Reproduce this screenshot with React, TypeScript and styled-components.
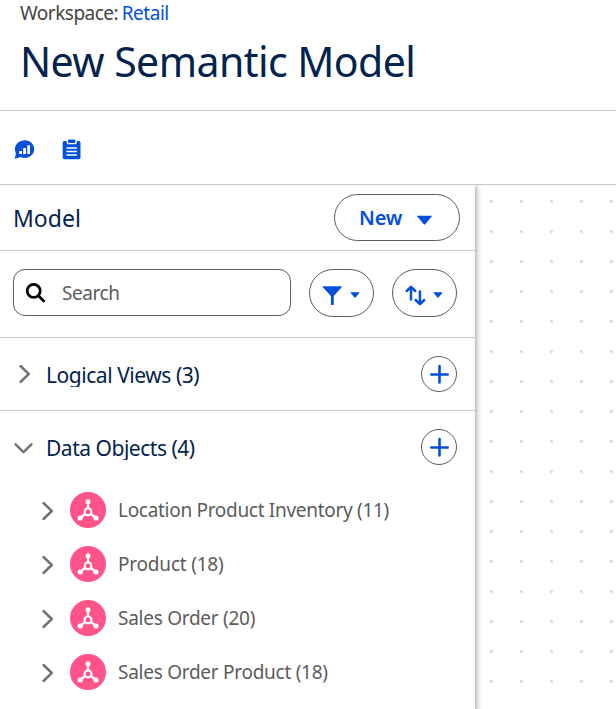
import React from "react";
import styled, { createGlobalStyle } from "styled-components";

const BLUE = "#0250d9";
const NAVY = "#03234d";
const LINE = "#c9c9c9";
const OUTLINE = "#5c5c5c";
const GREY = "#5c5c5c";

const GlobalStyle = createGlobalStyle`
  * { box-sizing: border-box; }
  body {
    margin: 0;
    background: #fff;
    font-family: "Segoe UI", "Noto Sans", "Open Sans", sans-serif;
    overflow: hidden;
  }
  svg { display: block; flex: none; }
`;

const Page = styled.div`
  width: 616px;
  height: 709px;
  display: flex;
  flex-direction: column;
  overflow: hidden;
`;

const Header = styled.header`
  height: 111px;
  flex: none;
  padding-left: 20px;
  border-bottom: 1px solid ${LINE};
`;

const Label = styled.span<{ $size: number; $track?: number; $color?: string; $weight?: number }>`
  font-size: ${(p) => p.$size}px;
  letter-spacing: ${(p) => p.$track ?? 0}px;
  color: ${(p) => p.$color ?? GREY};
  font-weight: ${(p) => p.$weight ?? 400};
  white-space: nowrap;
`;

const Crumb = styled.div`
  display: flex;
  gap: 3.5px;
  height: 26px;
  line-height: 26px;
`;

const Title = styled.h1`
  margin: 7px 0 0;
  height: 56px;
  line-height: 56px;
  font-size: 41px;
  letter-spacing: -0.55px;
  font-weight: 400;
  color: ${NAVY};
  white-space: nowrap;
`;

const Toolbar = styled.div`
  height: 74px;
  flex: none;
  display: flex;
  align-items: center;
  padding: 4px 0 0 14px;
  gap: 25.5px;
  border-bottom: 1px solid ${LINE};
`;

const Body = styled.div`
  flex: 1;
  display: flex;
  min-height: 0;
`;

const Panel = styled.aside`
  width: 475px;
  flex: none;
  background: #fff;
  box-shadow: 1px 2px 5px 1px rgba(0, 0, 0, 0.32);
  clip-path: inset(0 -10px 0 0);
`;

const Canvas = styled.main`
  flex: 1;
  background-image: radial-gradient(circle at 1.5px 1.5px, #dadada 1px, transparent 2px);
  background-size: 30px 30px;
  background-position: 15px 15px;
`;

const ModelRow = styled.div`
  height: 66px;
  display: flex;
  align-items: center;
  justify-content: space-between;
  padding: 0 15px 0 13px;
  border-bottom: 1px solid ${LINE};
`;

const NewButton = styled.button`
  width: 126px;
  height: 47px;
  padding: 0 0 0 24px;
  display: flex;
  align-items: center;
  gap: 14px;
  border: 1px solid ${OUTLINE};
  border-radius: 24px;
  background: #fff;
  font-family: inherit;
`;

const FilterRow = styled.div`
  height: 87px;
  display: flex;
  padding: 18px 0 0 13px;
  gap: 18px;
  border-bottom: 1px solid ${LINE};
`;

const SearchBox = styled.div`
  width: 278px;
  height: 47px;
  display: flex;
  align-items: center;
  padding-left: 11px;
  gap: 15px;
  border: 1px solid ${OUTLINE};
  border-radius: 12px;
`;

const PillButton = styled.button`
  width: 65px;
  height: 48px;
  padding: 0;
  border: 1px solid ${OUTLINE};
  border-radius: 24px;
  background: #fff;
`;

const SectionRow = styled.div<{ $divided?: boolean }>`
  height: ${(p) => (p.$divided ? 73 : 72)}px;
  display: flex;
  align-items: center;
  padding: 0 18px 0 13px;
  border-bottom: ${(p) => (p.$divided ? `1px solid ${LINE}` : "none")};
`;

const SectionTitle = styled.div`
  flex: 1;
  height: 25px;
  margin: 1px 0 0 11px;
  line-height: 26px;
  overflow: hidden;
`;

const AddButton = styled.button`
  width: 36px;
  height: 36px;
  padding: 0;
  display: flex;
  align-items: center;
  justify-content: center;
  border: 1px solid ${OUTLINE};
  border-radius: 50%;
  background: #fff;
`;

const ObjectRow = styled.div`
  height: 54px;
  display: flex;
  align-items: center;
  padding-left: 36px;
`;

const ObjectIcon = styled.div`
  width: 36px;
  height: 36px;
  margin: 0 12px;
  border-radius: 50%;
  background: #ff538a;
`;

const Chevron = ({ open, drop = 0 }: { open?: boolean; drop?: number }) => (
  <svg width="22" height="24" viewBox={`0 ${-drop} 22 24`} fill="none" stroke="#747474" strokeWidth="2.5" strokeLinecap="round" strokeLinejoin="round">
    <path d={open ? "M2.6 9.4 10.5 17.200 18.400 9.400" : "M7.500 4 15.800 12 7.500 20"} />
  </svg>
);

const ChatChartIcon = () => (
  <svg width="22" height="22" viewBox="0 0 22 22">
    <path d="M11 1.300c5.200 0 9.200 4 9.200 8.800S16.200 19 11 19c-1.700 0-3.100-.3-4.400-1L1.200 19.700c-.3.100-.5-.2-.4-.4l1.100-4.900C1.300 13 .9 11.600.9 10.100.9 5.300 5.400 1.300 11 1.300Z" fill={BLUE} />
    <path d="M5.200 12h2.800v3.100H5.200zM9.200 9h2.800v6.100H9.200zM13.200 6.200h2.800v8.900h-2.800z" fill="#fff" />
  </svg>
);

const ClipboardIcon = () => (
  <svg width="20" height="22" viewBox="0 0 20 22">
    <rect x=".7" y="2" width="17.800" height="18.300" rx="1.800" fill={BLUE} />
    <path d="M4.700 1.500v2.300c0 .8.600 1.400 1.400 1.400h7.200c.8 0 1.400-.6 1.400-1.400V1.500" fill="#fff" />
    <rect x="6" y=".4" width="7.300" height="3.700" rx="1" fill={BLUE} />
    <path d="M5 8.900h9.400M5 12.500h9.400M5 16.100h9.400" stroke="#fff" strokeWidth="1.500" strokeLinecap="round" />
  </svg>
);

const SearchIcon = () => (
  <svg width="22" height="22" viewBox="0 0 22 22" fill="none" stroke="#000" strokeLinecap="round">
    <circle cx="8.700" cy="8.900" r="6.500" strokeWidth="2.700" />
    <path d="m13.700 14 5 5" strokeWidth="2.800" />
  </svg>
);

const FilterIcon = () => (
  <svg width="63" height="46" viewBox="0 0 63 46" fill={BLUE}>
    <path d="M13.200 16.300h18c.7 0 .8.500.4.900L23.700 26v8.500c0 .7-2.800.7-2.800 0V26l-8.100-8.800c-.4-.4-.2-.9.400-.9Z" />
    <path d="M40.700 22.200h8.500c.4 0 .5.300.3.600l-4 4.600c-.3.400-.7.400-1 0l-4-4.600c-.3-.3-.2-.6.200-.6Z" />
  </svg>
);

const SortIcon = () => (
  <svg width="63" height="46" viewBox="0 0 63 46" fill="none" stroke={BLUE} strokeWidth="2.500" strokeLinecap="round" strokeLinejoin="round">
    <path d="M18 29.500V17.300M13.700 21l4.300-4.100 4.300 4.100M26.900 21.500v12M22.600 30l4.300 4.100 4.300-4.100" />
    <path stroke="none" fill={BLUE} d="M40.700 22.200h8.500c.4 0 .5.300.3.600l-4 4.600c-.3.400-.7.400-1 0l-4-4.600c-.3-.3-.2-.6.200-.6Z" />
  </svg>
);

const PlusIcon = () => (
  <svg width="20" height="20" viewBox="0 0 20 20" stroke={BLUE} strokeWidth="2.600" strokeLinecap="round">
    <path d="M10.500 2.100v16.400M2.300 10.500h16.400" />
  </svg>
);

const HubIcon = () => (
  <svg width="36" height="36" viewBox="0 0 36 36" fill="#fff" stroke="#fff">
    <path d="M18 10v6M15 22.200 10 25.700M21 22.200l5 3.500" strokeWidth="2.300" />
    <circle cx="18" cy="19.900" r="3.500" fill="none" strokeWidth="2.100" />
    <circle cx="18" cy="9.700" r="2.500" stroke="none" />
    <circle cx="10.200" cy="26" r="2.600" stroke="none" />
    <circle cx="26" cy="26" r="2.600" stroke="none" />
  </svg>
);

const objects = [
  { name: "Location Product Inventory (11)", track: -0.3 },
  { name: "Product (18)", track: -0.2 },
  { name: "Sales Order (20)", track: -0.27 },
  { name: "Sales Order Product (18)", track: -0.27 },
];

export default function App() {
  return (
    <Page>
      <GlobalStyle />
      <Header>
        <Crumb>
          <Label $size={19} $color="#444" $track={-0.5}>Workspace:</Label>
          <Label $size={19} $color={BLUE} $track={-0.45}>Retail</Label>
        </Crumb>
        <Title>New Semantic Model</Title>
      </Header>
      <Toolbar>
        <ChatChartIcon />
        <ClipboardIcon />
      </Toolbar>
      <Body>
        <Panel>
          <ModelRow>
            <Label $size={23} $color={NAVY}>Model</Label>
            <NewButton>
              <Label $size={20} $color={BLUE} $weight={600} $track={-0.2}>New</Label>
              <svg width="17" height="12" viewBox="0 -2 17 12" fill={BLUE} overflow="visible">
                <path d="M1.700 1.700h13.600c.6 0 .8.500.4.900l-6.500 7.700c-.4.500-1 .5-1.400 0L1.300 2.600c-.4-.4-.2-.9.400-.9Z" />
              </svg>
            </NewButton>
          </ModelRow>
          <FilterRow>
            <SearchBox>
              <SearchIcon />
              <Label $size={19} $track={-0.45}>Search</Label>
            </SearchBox>
            <PillButton><FilterIcon /></PillButton>
            <PillButton><SortIcon /></PillButton>
          </FilterRow>
          <SectionRow $divided>
            <Chevron />
            <SectionTitle><Label $size={21} $color={NAVY} $track={-0.45}>Logical Views (3)</Label></SectionTitle>
            <AddButton><PlusIcon /></AddButton>
          </SectionRow>
          <SectionRow>
            <Chevron open />
            <SectionTitle><Label $size={21} $color={NAVY} $track={-0.48}>Data Objects (4)</Label></SectionTitle>
            <AddButton><PlusIcon /></AddButton>
          </SectionRow>
          {objects.map((o) => (
            <ObjectRow key={o.name}>
              <Chevron drop={1} />
              <ObjectIcon><HubIcon /></ObjectIcon>
              <Label $size={19} $track={o.track}>{o.name}</Label>
            </ObjectRow>
          ))}
        </Panel>
        <Canvas />
      </Body>
    </Page>
  );
}
